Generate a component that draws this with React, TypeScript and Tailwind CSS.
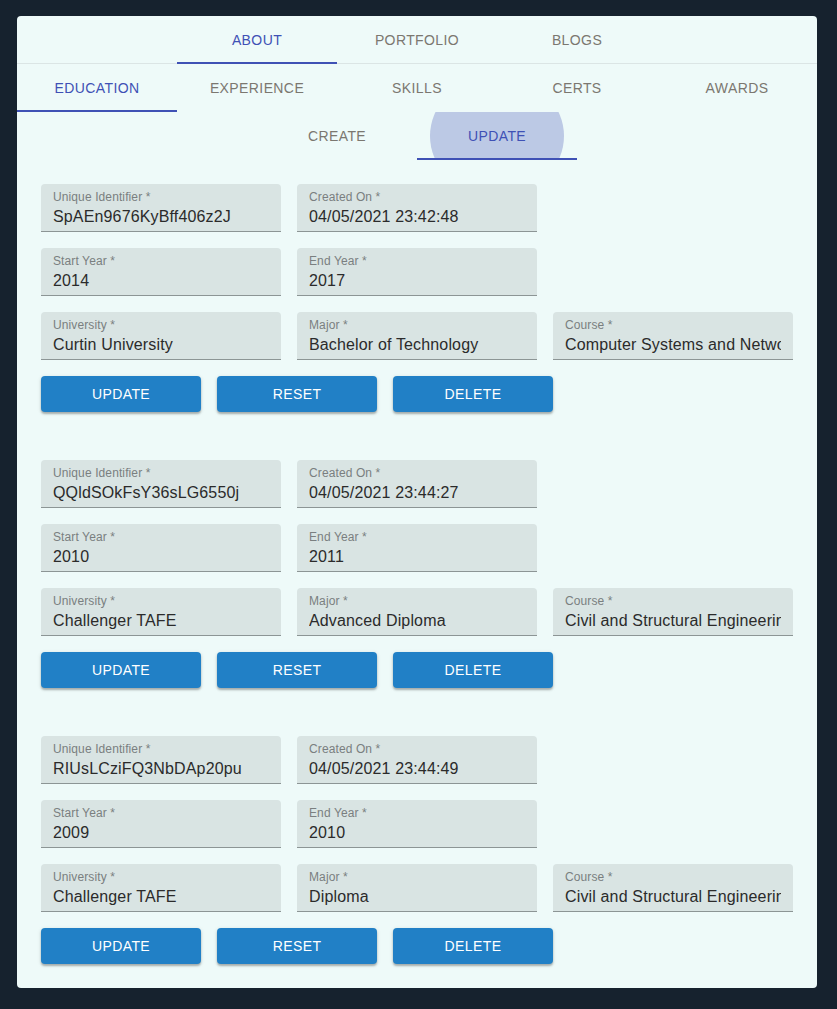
import React from "react";

const font = { fontFamily: '"Liberation Sans", Arial, sans-serif' };

function Tab({ label, active, ripple }: { label: string; active?: boolean; ripple?: boolean }) {
  return (
    <div className="relative w-[160px] h-[48px] flex items-center justify-center overflow-hidden">
      {ripple && (
        <div className="absolute left-[13px] top-[-31px] w-[134px] h-[110px] rounded-full bg-[#bcc9e5]" />
      )}
      <span
        className={`relative text-[14px] uppercase tracking-[0.4px] ${active ? "text-[#3f51b5]" : "text-[#7b7770]"}`}
      >
        {label}
      </span>
      {active && <div className="absolute left-0 right-0 bottom-0 h-[2px] bg-[#3f51b5]" />}
    </div>
  );
}

function Field({ label, value }: { label: string; value: string }) {
  return (
    <div className="w-[240px] h-[48px] bg-[#d9e4e3] rounded-t-[4px] border-b border-[#8c9595] pl-[12px] pr-[12px] overflow-hidden">
      <div className="text-[12px] leading-[14px] tracking-[0.11px] text-[#7a7f80] mt-[6px] whitespace-nowrap">{label} *</div>
      <div className="text-[16px] leading-[19px] tracking-[0.15px] text-[#2b2b2b] mt-[3px] whitespace-nowrap overflow-hidden">{value}</div>
    </div>
  );
}

function Btn({ label }: { label: string }) {
  return (
    <button className="w-[160px] h-[36px] rounded-[4px] bg-[#2180c6] text-white text-[14px] uppercase tracking-[0.4px] shadow-[0_2px_2px_rgba(0,0,0,0.25),0_1px_4px_rgba(0,0,0,0.12)]">
      {label}
    </button>
  );
}

type Rec = {
  id: string;
  created: string;
  start: string;
  end: string;
  uni: string;
  major: string;
  course: string;
};

const recs: Rec[] = [
  {
    id: "SpAEn9676KyBff406z2J",
    created: "04/05/2021 23:42:48",
    start: "2014",
    end: "2017",
    uni: "Curtin University",
    major: "Bachelor of Technology",
    course: "Computer Systems and Networking",
  },
  {
    id: "QQldSOkFsY36sLG6550j",
    created: "04/05/2021 23:44:27",
    start: "2010",
    end: "2011",
    uni: "Challenger TAFE",
    major: "Advanced Diploma",
    course: "Civil and Structural Engineering",
  },
  {
    id: "RIUsLCziFQ3NbDAp20pu",
    created: "04/05/2021 23:44:49",
    start: "2009",
    end: "2010",
    uni: "Challenger TAFE",
    major: "Diploma",
    course: "Civil and Structural Engineering",
  },
];

function Form({ r }: { r: Rec }) {
  return (
    <div className="flex flex-col gap-[16px]">
      <div className="flex gap-[16px]">
        <Field label="Unique Identifier" value={r.id} />
        <Field label="Created On" value={r.created} />
      </div>
      <div className="flex gap-[16px]">
        <Field label="Start Year" value={r.start} />
        <Field label="End Year" value={r.end} />
      </div>
      <div className="flex gap-[16px]">
        <Field label="University" value={r.uni} />
        <Field label="Major" value={r.major} />
        <Field label="Course" value={r.course} />
      </div>
      <div className="flex gap-[16px]">
        <Btn label="Update" />
        <Btn label="Reset" />
        <Btn label="Delete" />
      </div>
    </div>
  );
}

export default function App() {
  return (
    <div className="min-h-[1009px] bg-[#16222e] pt-[16px] pb-[21px]" style={font}>
      <div className="mx-[17px] w-[800px] bg-[#eefaf9] rounded-[4px] overflow-hidden">
        <div className="flex justify-center border-b border-[#dbe5e5] h-[48px]">
          <Tab label="About" active />
          <Tab label="Portfolio" />
          <Tab label="Blogs" />
        </div>
        <div className="flex">
          <Tab label="Education" active />
          <Tab label="Experience" />
          <Tab label="Skills" />
          <Tab label="Certs" />
          <Tab label="Awards" />
        </div>
        <div className="flex justify-center">
          <Tab label="Create" />
          <Tab label="Update" active ripple />
        </div>
        <div className="px-[24px] pt-[24px] pb-[24px] flex flex-col gap-[48px]">
          {recs.map((r) => (
            <Form key={r.id} r={r} />
          ))}
        </div>
      </div>
    </div>
  );
}
